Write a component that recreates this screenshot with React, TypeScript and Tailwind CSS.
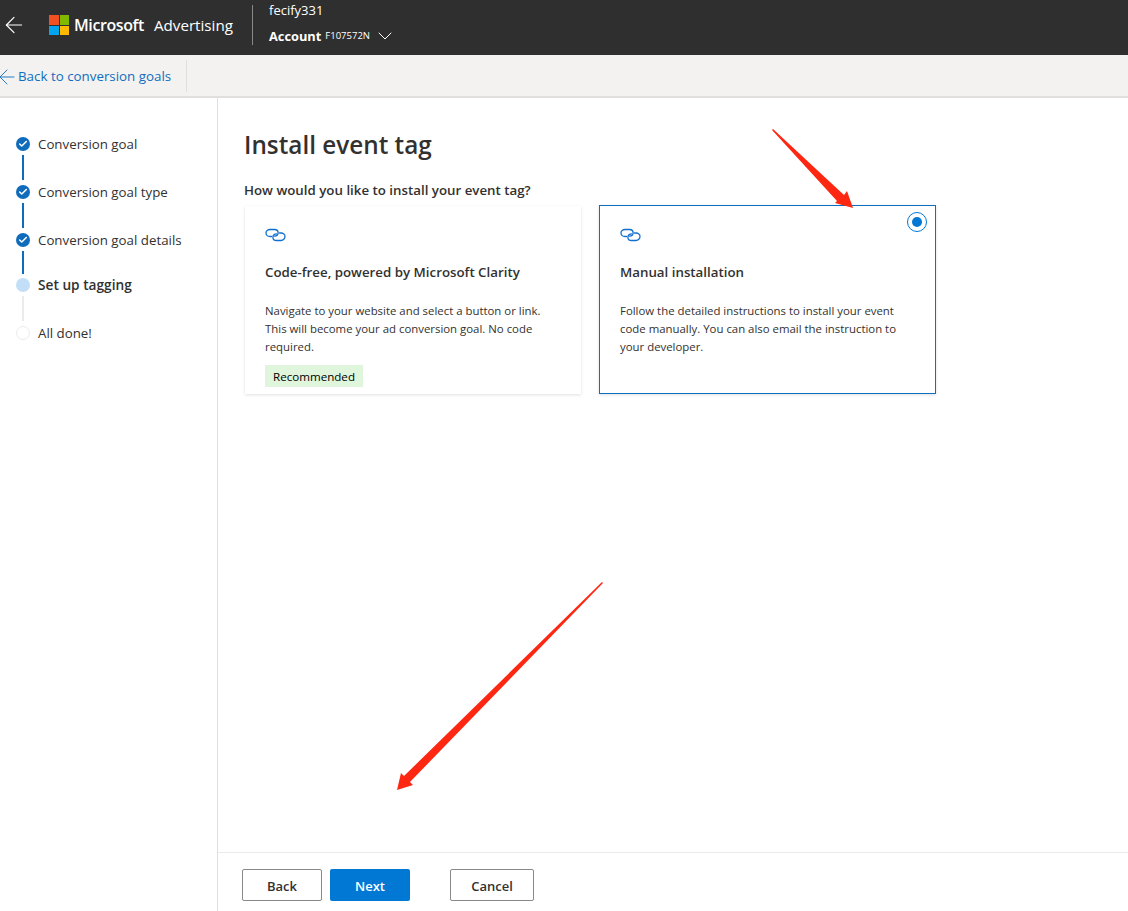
import { ArrowLeft, Check, ChevronDown } from "lucide-react";

const segoe = "font-['Open_Sans',sans-serif]";

function LinkIcon() {
  return (
    <svg width="21" height="14" viewBox="0 0 21 14" fill="none" stroke="#0f6fd0" strokeWidth="1.3" strokeLinecap="round">
      <path d="M6.500 8.500H5C2.800 8.500 1 7 1 5s1.800-3.500 4-3.500h4.500c2 0 3.600 1.400 3.600 3.300 0 1.900-1.600 3.300-3.600 3.300" />
      <path d="M14.500 5H16c2.200 0 4 1.500 4 3.500S18.200 12.500 16 12.500h-4.500c-2 0-3.600-1.400-3.600-3.300 0-1.900 1.600-3.400 3.600-3.400" />
    </svg>
  );
}

function Step({ label, state }: { label: string; state: "done" | "current" | "todo" }) {
  return (
    <div className="flex h-[22px] items-center">
      {state === "done" && (
        <span className="flex h-[14px] w-[14px] items-center justify-center rounded-full bg-[#0f6cbd]">
          <Check size={10} strokeWidth={3.5} className="text-white" />
        </span>
      )}
      {state === "current" && <span className="h-[14px] w-[14px] rounded-full bg-[#c2dff7]" />}
      {state === "todo" && <span className="h-[14px] w-[14px] rounded-full border border-[#edebe9] bg-white" />}
      <span className={`ml-2 mt-[1px] text-[#323130] ${state === "current" ? "text-[13.700px] font-semibold" : "text-[13.300px]"}`}>
        {label}
      </span>
    </div>
  );
}

export default function App() {
  return (
    <div className={`relative flex h-[911px] w-[1128px] flex-col overflow-hidden bg-white ${segoe}`}>
      {/* Top bar */}
      <header className="flex h-[55px] shrink-0 items-center bg-[#2f2f2f] pb-[5px] text-white">
        <ArrowLeft size={26} strokeWidth={1.1} className="ml-[1px]" />
        <div className="ml-[22px] grid h-[20px] w-[20px] grid-cols-2 gap-[1px]">
          <span className="bg-[#f25022]" />
          <span className="bg-[#7fba00]" />
          <span className="bg-[#00a4ef]" />
          <span className="bg-[#ffb900]" />
        </div>
        <span className="ml-[5px] text-[16px] font-semibold tracking-[-0.4px]">Microsoft</span>
        <span className="ml-[10px] text-[15.200px]">Advertising</span>
        <div className="ml-[19px] h-[40px] w-px bg-[#8a8886]" />
        <div className="ml-[16px] flex h-[50px] flex-col">
          <div className="mt-[1px] text-[13px] leading-[18px]">fecify331</div>
          <div className="mt-[8px] flex h-[18px] items-center">
            <span className="text-[12.800px] font-bold leading-[18px]">Account</span>
            <span className="ml-[4px] text-[9.500px]">F107572N</span>
            <ChevronDown size={24} strokeWidth={1} className="ml-[3px]" />
          </div>
        </div>
      </header>

      {/* Sub bar */}
      <div className="flex h-[43px] shrink-0 items-center border-b-2 border-[#e1dfdd] bg-[#f3f2f1]">
        <ArrowLeft size={24} strokeWidth={0.9} className="ml-[-5px] mt-[2px] text-[#106ebe]" />
        <a className="ml-[-1px] mt-[2px] text-[13.350px] text-[#106ebe]">Back to conversion goals</a>
        <div className="ml-[15px] h-[32px] w-px bg-[#e1dfdd]" />
      </div>

      <div className="flex min-h-0 flex-1">
        {/* Steps */}
        <aside className="w-[218px] shrink-0 border-r border-[#e1dfdd] pl-[16px] pt-[35px]">
          <Step label="Conversion goal" state="done" />
          <div className="mb-[1px] ml-[6px] h-[25px] w-[2px] bg-[#0f6cbd]" />
          <Step label="Conversion goal type" state="done" />
          <div className="mb-[1px] ml-[6px] h-[25px] w-[2px] bg-[#0f6cbd]" />
          <Step label="Conversion goal details" state="done" />
          <div className="ml-[6px] h-[23px] w-[2px] bg-[#0f6cbd]" />
          <Step label="Set up tagging" state="current" />
          <div className="mb-[1px] ml-[6px] h-[25px] w-[2px] bg-[#edebe9]" />
          <Step label="All done!" state="todo" />
        </aside>

        {/* Main */}
        <main className="flex min-w-0 flex-1 flex-col">
          <div className="flex-1 pl-[26px]">
            <h1 className="mt-[29px] text-[24.300px] font-semibold leading-[36px] text-[#323130]">Install event tag</h1>
            <p className="mt-[17px] text-[13.300px] font-semibold leading-[20px] text-[#323130]">
              How would you like to install your event tag?
            </p>
            <div className="ml-[1px] mt-[5px] flex gap-[18px]">
              <div className="mt-px h-[188px] w-[336px] bg-white pl-[20px] pt-[22px] shadow-[0_1px_3px_rgba(0,0,0,0.13)]">
                <LinkIcon />
                <h3 className="mt-[20px] text-[13.300px] font-semibold leading-[20px] text-[#323130]">
                  Code-free, powered by Microsoft Clarity
                </h3>
                <p className="mt-[20px] w-[290px] text-[11.400px] leading-[18px] text-[#323130]">
                  Navigate to your website and select a button or link. This will become your ad conversion goal. No code required.
                </p>
                <span className="mt-[9px] inline-block h-[22px] bg-[#dff6dd] px-[8px] pt-[1px] text-[11.600px] leading-[22px] text-black">
                  Recommended
                </span>
              </div>
              <div className="relative h-[189px] w-[337px] border border-[#106ebe] bg-white pl-[20px] pt-[22px] shadow-[0_1px_3px_rgba(0,0,0,0.13)]">
                <span className="absolute right-[8px] top-[6px] flex h-[20px] w-[20px] items-center justify-center rounded-full border-[1.500px] border-[#0078d4]">
                  <span className="h-[10px] w-[10px] rounded-full bg-[#0078d4]" />
                </span>
                <LinkIcon />
                <h3 className="mt-[20px] text-[13.300px] font-semibold leading-[20px] text-[#323130]">Manual installation</h3>
                <p className="mt-[20px] w-[290px] text-[11.400px] leading-[18px] text-[#323130]">
                  Follow the detailed instructions to install your event code manually. You can also email the instruction to your developer.
                </p>
              </div>
            </div>
          </div>

          {/* Footer */}
          <footer className="flex h-[59px] shrink-0 items-start border-t border-[#edebe9] pl-[24px] pt-[16px]">
            <button className="h-[32px] w-[80px] rounded-[2px] border border-[#8a8886] bg-white pt-[3px] text-[13px] font-semibold text-[#323130]">
              Back
            </button>
            <button className="ml-[8px] h-[32px] w-[80px] rounded-[2px] bg-[#0078d4] pt-[3px] text-[13px] font-semibold text-white">
              Next
            </button>
            <button className="ml-[40px] h-[32px] w-[84px] rounded-[2px] border border-[#8a8886] bg-white pt-[3px] text-[13px] font-semibold text-[#323130]">
              Cancel
            </button>
          </footer>
        </main>
      </div>

      {/* Annotation arrows drawn over the screenshot */}
      <svg className="pointer-events-none absolute left-0 top-0" width="1128" height="911" fill="#fe2712">
        <polygon points="772,130 773,129 844,195 847,191 853,208 835,203 837,201" />
        <polygon points="602,582 603,583 410,782 413,785 397,790 401,773 404,776" />
      </svg>
    </div>
  );
}
